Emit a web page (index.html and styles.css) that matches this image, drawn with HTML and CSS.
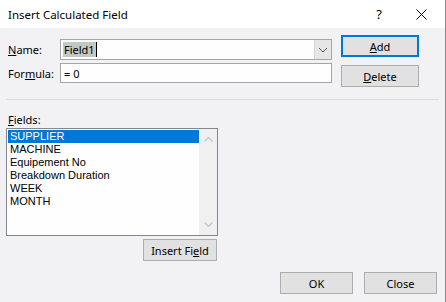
FILE: index.html
```html
<!DOCTYPE html>
<html>
  <head>
    <link rel="stylesheet" href="styles.css">
  </head>

  <body>
    <div class="dialog">
      <!-- title bar -->
      <div class="titlebar">
        <span class="title">Insert Calculated Field</span>
        <span class="help">?</span>
        <svg class="close-x" width="11" height="11" viewBox="0 0 11 11">
          <path d="M0.5 0.5 L10.5 10.5 M10.5 0.5 L0.5 10.5" stroke="#000" stroke-width="1" fill="none"/>
        </svg>
      </div>

      <div class="content">
        <!-- name / formula -->
        <div class="top">
          <div class="inputs">
            <div class="row name-row">
              <label><u>N</u>ame:</label>
              <div class="combo">
                <span class="combo-text"><span class="sel">Field1</span><span class="caret"></span></span>
                <span class="combo-btn">
                  <svg width="10" height="6" viewBox="0 0 10 6">
                    <path d="M1 1 L5 5 L9 1" stroke="#555" stroke-width="1" fill="none"/>
                  </svg>
                </span>
              </div>
            </div>
            <div class="row formula-row">
              <label>For<u>m</u>ula:</label>
              <div class="textbox">= 0</div>
            </div>
          </div>
          <div class="side-buttons">
            <button class="btn default"><u>A</u>dd</button>
            <button class="btn delete"><u>D</u>elete</button>
          </div>
        </div>

        <div class="separator"></div>

        <!-- fields list -->
        <div class="fields">
          <div class="fields-label"><u>F</u>ields:</div>
          <div class="listbox">
            <ul class="items">
              <li class="selected">SUPPLIER</li>
              <li>MACHINE</li>
              <li>Equipement No</li>
              <li>Breakdown Duration</li>
              <li>WEEK</li>
              <li>MONTH</li>
            </ul>
            <div class="scrollbar">
              <svg width="9" height="5" viewBox="0 0 9 5"><path d="M0.5 4.5 L4.5 0.5 L8.5 4.5" stroke="#c4c4c4" stroke-width="1.2" fill="none"/></svg>
              <svg width="9" height="5" viewBox="0 0 9 5"><path d="M0.5 0.5 L4.5 4.5 L8.5 0.5" stroke="#c4c4c4" stroke-width="1.2" fill="none"/></svg>
            </div>
          </div>
          <div class="insert-row">
            <button class="btn insert">Insert Fi<u>e</u>ld</button>
          </div>
        </div>

        <!-- footer -->
        <div class="footer">
          <button class="btn">OK</button>
          <button class="btn">Close</button>
        </div>
      </div>
    </div>
  </body>
</html>
```

FILE: styles.css
```css
body {
  margin: 0;
  font-family: "Noto Sans", "Open Sans", sans-serif;
  font-size: 11px;
  color: #000;
}

.dialog {
  width: 445px;
  height: 302px;
  border-right: 1px solid #8a8a8a;
  display: flex;
  flex-direction: column;
  background: #f2f1f4;
}

.titlebar {
  height: 28px;
  background: #fff;
  display: flex;
  align-items: center;
  padding-left: 8px;
}

.title {
  flex: 1;
  font-size: 11.5px;
}

.help {
  font-size: 13px;
  margin-right: 34px;
}

.close-x {
  margin-right: 18px;
}

.content {
  flex: 1;
  display: flex;
  flex-direction: column;
}

.top {
  display: flex;
  padding: 7px 0 0 8px;
}

.inputs {
  width: 324px;
}

.row {
  display: flex;
  align-items: center;
}

.row label {
  width: 52px;
}

.name-row {
  margin-top: 4px;
  height: 21px;
}

.formula-row {
  margin-top: 3px;
  height: 20px;
}

.combo {
  flex: 1;
  height: 21px;
  box-sizing: border-box;
  border: 1px solid #a5a5a5;
  background: #fdfefd;
  display: flex;
}

.combo-text {
  flex: 1;
  display: flex;
  align-items: center;
  padding-left: 2px;
}

.sel {
  background: #c2c8c2;
  padding: 0 1px;
  line-height: 15px;
}

.caret {
  width: 1px;
  height: 15px;
  background: #000;
}

.combo-btn {
  width: 16px;
  background: #e6e6e6;
  border-left: 1px solid #d6d6d6;
  display: flex;
  align-items: center;
  justify-content: center;
}

.textbox {
  flex: 1;
  height: 20px;
  box-sizing: border-box;
  border: 1px solid #a5a5a5;
  background: #fdfefd;
  padding-left: 3px;
  display: flex;
  align-items: center;
}

.side-buttons {
  margin-left: 9px;
  display: flex;
  flex-direction: column;
}

.btn {
  font-family: inherit;
  font-size: 11px;
  color: #000;
  background: #e1e1e1;
  border: 1px solid #adadad;
  width: 73px;
  height: 22px;
  padding: 0;
  box-sizing: border-box;
}

.side-buttons .btn {
  width: 78px;
}

.btn.default {
  border: 2px solid #0078d7;
}

.btn.delete {
  margin-top: 8px;
}

.separator {
  margin: 12px 6px 0 6px;
  height: 1px;
  background: #dcdcdc;
}

.fields {
  width: 212px;
  margin-left: 6px;
  display: flex;
  flex-direction: column;
}

.fields-label {
  margin: 12px 0 0 2px;
  height: 16px;
  line-height: 16px;
}

.listbox {
  height: 108px;
  box-sizing: border-box;
  border: 1px solid #828790;
  background: #fdfefd;
  display: flex;
  padding: 1px 0 1px 1px;
}

.items {
  list-style: none;
  margin: 0;
  padding: 0;
  flex: 1;
  font-family: "Liberation Sans", Arial, sans-serif;
  font-size: 11px;
}

.items li {
  height: 13px;
  line-height: 13px;
  padding-left: 2px;
}

.items li.selected {
  background: #0078d7;
  color: #fff;
}

.scrollbar {
  width: 18px;
  margin: -1px 0 -1px 0;
  background: #f0f0f0;
  display: flex;
  flex-direction: column;
  justify-content: space-between;
  align-items: center;
  padding: 8px 0 8px 0;
}

.insert-row {
  display: flex;
  justify-content: flex-end;
  margin-top: 3px;
  padding-right: 1px;
}

.btn.insert {
  width: 74px;
}

.footer {
  display: flex;
  justify-content: flex-end;
  gap: 11px;
  padding-right: 8px;
  margin-top: 11px;
}
```
